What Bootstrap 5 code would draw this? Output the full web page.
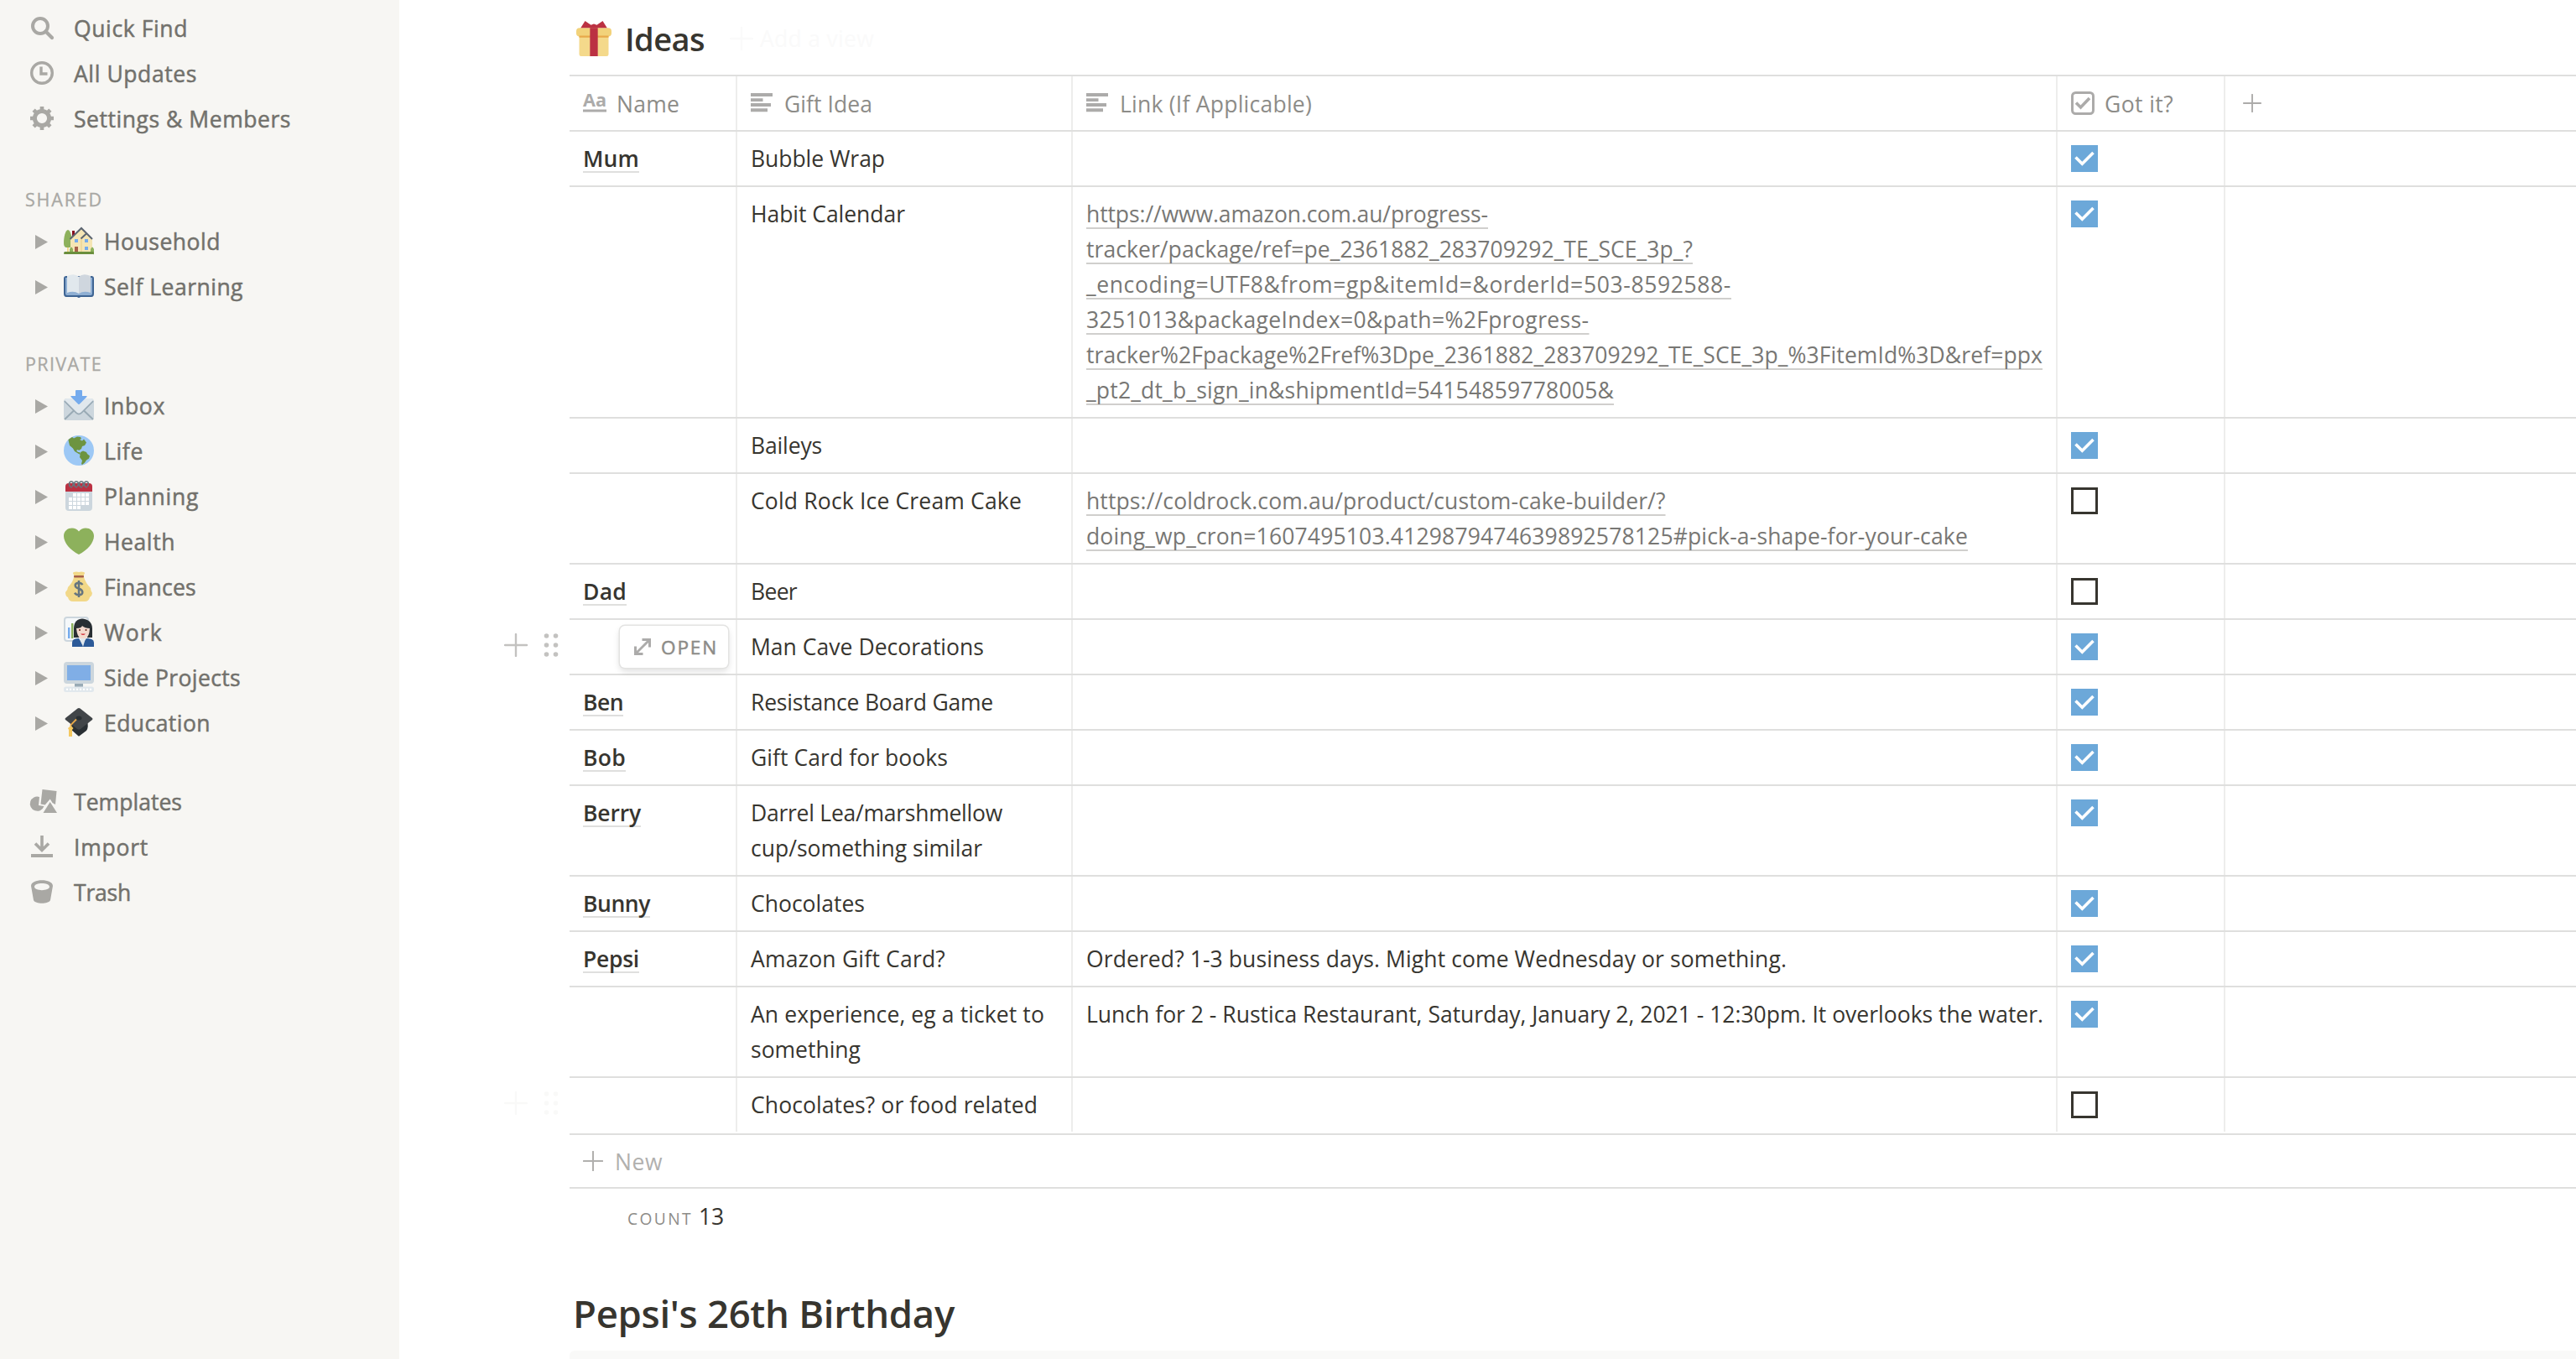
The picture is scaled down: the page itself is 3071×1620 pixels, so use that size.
<!DOCTYPE html>
<html lang="en">
<head>
<meta charset="utf-8">
<title>Ideas</title>
<link rel="stylesheet" href="https://cdn.jsdelivr.net/npm/bootstrap@5.3.0/dist/css/bootstrap.min.css">
<style>
body{font-family:"Open Sans","Noto Sans",sans-serif;font-size:26.5px;line-height:42px;color:#37352f;background:#fff;height:1620px;overflow:hidden}
[data-w]{display:inline-block;white-space:nowrap}
.side{width:476px;background:#f7f6f3;color:#72716c;padding-top:7px;-webkit-text-stroke:.5px #72716c}
.item{height:54px}
.item svg{-webkit-text-stroke:0}
.item .ico{width:28px;height:28px;margin-left:36px;margin-right:24px;color:#a9a8a4;fill:currentColor;overflow:visible}
.item .tri{width:15px;height:17px;margin-left:42px;margin-right:19px;fill:#a9a8a4}
.item .emo{width:36px;height:36px;margin-right:12px;position:relative;top:-1px}
.group{font-size:21.5px;color:#a9a8a4;padding-left:30px;height:52px;padding-top:8px;-webkit-text-stroke:.3px #a9a8a4}
.sec{margin-top:40px}
.sec.tight{margin-top:36px}
.main{width:2595px}
.ttl{height:89px;margin-left:203px;padding-left:8px;padding-top:2px}
.ttl .gift{width:42px;height:42px}
.ttl h3{font-size:38px;font-weight:600;line-height:50px;margin-left:16px}
.faint{color:#fafafa}
.addview{margin-left:30px}
.line{margin-left:203px;border-top:2px solid #dfdfde}
.trow{margin-left:203px;border-bottom:2px solid #dfdfde;position:relative}
.trow>div{padding:11px 14px 11px 16px;border-right:2px solid #ededec;min-height:64px;flex:none}
.trow>div:last-child{border-right:0}
.c1{width:200px}.c2{width:400px}.c3{width:1174px}.c4{width:200px}
.head{color:#8d8c88}
.head span{margin:1px 0 -1px}
.head svg{width:28px;height:28px;margin-right:12px;flex:none;overflow:visible}
.trow>.c5{padding-left:21px}
.head .c5 svg{width:22px;height:22px}
.nm{font-weight:600;text-decoration:underline #dfdfde 2px;text-underline-offset:5px;text-decoration-skip-ink:none}
.url{color:#787774}
.url span{text-decoration:underline #d0cfcd 2px;text-underline-offset:6px;text-decoration-skip-ink:none}
.box{width:32px;height:32px;margin-top:5px;display:block}
.on{background:#6ca8d9}
.off{border:3px solid #37352f}
.handle{position:absolute;left:-78px;top:16px;width:66px;height:28px;color:#c3c2c0}
.handle.faint{color:#f9f9f8}
.openbtn{position:absolute;left:60px;top:7px;width:129px;height:50px;background:#fff;border-radius:6px;box-shadow:0 0 0 1.5px #e3e3e2,0 4px 8px rgba(15,15,15,.14);color:#8d8c88;font-size:22.5px;-webkit-text-stroke:.5px #8d8c88}
.openbtn span{padding-top:2px}
.openbtn svg{margin-left:17px;margin-right:12px}
.newrow{margin-left:203px;height:66px;border-top:2px solid #dfdfde;border-bottom:2px solid #dfdfde;color:#b1b0ae;padding-left:16px}
.newrow svg{margin-right:14px}
.newrow span{margin-top:2px}
.count{padding-left:272px;height:66px;padding-top:2px}
.count small{font-size:19.2px;color:#8d8c88;margin-right:7px}
h2.bday{font-size:45.5px;font-weight:600;line-height:60px;margin:52px 0 0 207px}
.panel{margin-left:203px;margin-top:15px;height:40px;background:#f9f9f8;border-radius:6px 0 0 0}
</style>
<script src="https://cdn.jsdelivr.net/npm/bootstrap@5.3.0/dist/js/bootstrap.bundle.min.js"></script>
</head>
<body>
<svg width="0" height="0" class="position-absolute"><defs>
<symbol id="tri" viewBox="0 0 15 17"><path d="M0 0L15 8.5L0 17Z"/></symbol>
<symbol id="plus" viewBox="0 0 28 28"><path d="M14 1V27M1 14H27" stroke="currentColor" stroke-width="2.4" stroke-linecap="round"/></symbol>
<symbol id="text" viewBox="0 0 28 28"><path fill="#acabaa" d="M0 2h26v4H0zM0 8.2h14.500v3.800H0zM0 14h24v4H0zM0 20.200h20v4H0z"/></symbol>
<symbol id="tick" viewBox="0 0 32 32"><path d="M5.500 14.500L13.300 22.300L26.500 9" fill="none" stroke="#fff" stroke-width="3.600"/></symbol>
<symbol id="dots" viewBox="0 0 66 28"><path d="M14 1V27M1 14H27" stroke="currentColor" stroke-width="2.400" stroke-linecap="round"/><g fill="currentColor"><circle cx="50.500" cy="3" r="2.800"/><circle cx="61.500" cy="3" r="2.800"/><circle cx="50.500" cy="14" r="2.800"/><circle cx="61.500" cy="14" r="2.800"/><circle cx="50.500" cy="25" r="2.800"/><circle cx="61.500" cy="25" r="2.800"/></g></symbol>
</defs></svg>
<div class="d-flex h-100">
<nav class="side h-100 flex-shrink-0">
  <div class="item d-flex align-items-center"><svg class="ico" viewBox="0 0 28 28"><circle cx="12" cy="11" r="9" fill="none" stroke="currentColor" stroke-width="4"/><path d="M18.500 17.500L26 25" stroke="currentColor" stroke-width="4.200" stroke-linecap="round"/></svg><span data-w="136">Quick Find</span></div>
  <div class="item d-flex align-items-center"><svg class="ico" viewBox="0 0 28 28"><circle cx="14" cy="13" r="12.300" fill="none" stroke="currentColor" stroke-width="3.400"/><path d="M13 5.500V14H20.500" fill="none" stroke="currentColor" stroke-width="3.400"/></svg><span data-w="147">All Updates</span></div>
  <div class="item d-flex align-items-center"><svg class="ico" viewBox="0 0 28 28"><circle cx="14" cy="13" r="8.600" fill="none" stroke="currentColor" stroke-width="5"/><g stroke="currentColor" stroke-width="4.600"><path d="M14-1V4M14 22v5M0 13H5M23 13h5M4.100 3.100l3.500 3.500M20.400 19.400l3.500 3.500M23.900 3.100l-3.500 3.500M7.600 19.400l-3.500 3.500"/></g></svg><span data-w="259">Settings &amp; Members</span></div>
  <div class="sec"></div>
  <div class="group"><span data-w="93">SHARED</span></div>
  <div class="item d-flex align-items-center"><svg class="tri"><use href="#tri"/></svg><svg class="emo" viewBox="0 0 36 36"><path fill="#F4D98B" d="M4 26h2v7H4z"/><path fill="#8DB15C" d="M5 5C2 5 0 14 0 20s2 6 5 6 5 0 5-6S8 5 5 5z"/><path fill="#880E1F" d="M10 6h3v6h-3z"/><path fill="#F4E5B4" d="M21 3L8 15v17h26V16L27 10z"/><path fill="#E9CE85" d="M20.500 14h1v18h-1z"/><path fill="none" stroke="#5C6570" stroke-width="2" d="M7.500 16L21 3L34 16M20.500 15.500L27 9.500"/><path fill="#75ABED" d="M13 16h4v4h-4zM25 16h4v4h-4zM25 25h4v4h-4z"/><path fill="#A6604B" d="M13 25h4v8h-4z"/><path fill="#8DB15C" d="M7 33v-5q2-5 4 0v5zM32 33v-5q2-5 4 0v5z"/><path fill="#6A8E3D" d="M1 31h34q1 0 1 2t-1 1H1q-1 0-1-1t1-2z"/></svg><span data-w="139">Household</span></div>
  <div class="item d-flex align-items-center"><svg class="tri"><use href="#tri"/></svg><svg class="emo" viewBox="0 0 36 36"><path fill="#3E6493" d="M3 6h30q3 0 3 3v18q0 4-3 4H20q-2 2-4 0H3q-3 0-3-4V9q0-3 3-3z"/><path fill="#8FAFD3" d="M2 8h32v19q0 2-2 2H4q-2 0-2-2z"/><path fill="#E1E8ED" d="M4 6q9-4 14 1v20q-6-4-14-1z"/><path fill="#CFD6DE" d="M32 6q-9-4-14 1v20q6-4 14-1z"/></svg><span data-w="166">Self Learning</span></div>
  <div class="sec tight"></div>
  <div class="group"><span data-w="92">PRIVATE</span></div>
  <div class="item d-flex align-items-center"><svg class="tri"><use href="#tri"/></svg><svg class="emo" viewBox="0 0 36 36"><rect y="10" width="36" height="26" rx="4" fill="#CCD6DD"/><path d="M1 35L12.500 24M35 35L23.500 24M1 13L15 27q3 3 6 0L35 13" fill="none" stroke="#99AAB5" stroke-width="2"/><path fill="#E1E8ED" d="M4 10h28q3 0 3 2L21 26q-3 3-6 0L1 12q0-2 3-2z"/><path fill="#75ABED" d="M14 1q0-1 1-1h6q1 0 1 1v6h5q1 0 .5 1L19 16.500q-1 1-2 0L8.500 8Q8 7 9 7h5z"/></svg><span data-w="73">Inbox</span></div>
  <div class="item d-flex align-items-center"><svg class="tri"><use href="#tri"/></svg><svg class="emo" viewBox="0 0 36 36"><circle cx="18" cy="18" r="18" fill="#9DC8F5"/><path fill="#6D9440" d="M5.500 5L10 2l2 1.500L16 1.500l4 .5 1 2-2 1 3 1.500 2-2 3 4-2 3.500-3 1-1 3-3 2-1-1-2 1 2 2h2l1 3-3-1.500L13 19l-2-3.500-4-3.500-1-4zM20 20l3-1.500 4 1.500 1 2 3 2.500-1 3-3 2-2 3-3 2.500-1-1 1-4-3-4z"/></svg><span data-w="47">Life</span></div>
  <div class="item d-flex align-items-center"><svg class="tri"><use href="#tri"/></svg><svg class="emo" viewBox="0 0 36 36"><rect x="2" y="4" width="32" height="32" rx="4" fill="#CCD6DD"/><path fill="#BB3142" d="M2 13V7q0-4 4-4h24q4 0 4 4v6z"/><path fill="#fff" d="M11 15h4v4h-4zm5 0h4v4h-4zm5 0h4v4h-4zm5 0h4v4h-4zM6 20h4v4H6zm5 0h4v4h-4zm5 0h4v4h-4zm5 0h4v4h-4zm5 0h4v4h-4zM6 25h4v4H6zm5 0h4v4h-4zm5 0h4v4h-4zm5 0h4v4h-4zm5 0h4v4h-4zM6 30h4v4H6zm5 0h4v4h-4zm5 0h4v4h-4z"/><path fill="none" stroke="#66757F" stroke-width="1.600" d="M10 8C5 7 6 1 9 1s3 4 1 6M16 8C11 7 12 1 15 1s3 4 1 6M22 8C17 7 18 1 21 1s3 4 1 6M28 8C23 7 24 1 27 1s3 4 1 6"/></svg><span data-w="113">Planning</span></div>
  <div class="item d-flex align-items-center"><svg class="tri"><use href="#tri"/></svg><svg class="emo" viewBox="0 0 36 36"><path fill="#8DB15C" d="M36 12C36 2 23 -.5 18 6.500C13 -.5 0 2 0 12C0 20 8 29 18 34C28 29 36 20 36 12z"/></svg><span data-w="85">Health</span></div>
  <div class="item d-flex align-items-center"><svg class="tri"><use href="#tri"/></svg><svg class="emo" viewBox="0 0 36 36"><path fill="#F2D888" d="M12 1q3-1 6 0 3-1 6 0 2 1 0 3v3q2 7 8 13 0 3 2 6 0 3-3 5-1 5-6 5H11q-5 0-6-5-3-1-3-6 3-3 3-6 6-6 7-12V4q-2-2 0-3z"/><rect x="12" y="5" width="12" height="2.600" rx="1" fill="#A6604B"/><path d="M22.500 16q-2-2.600-5-2.200-4 .5-3.800 3.200t4.300 3.800 4.300 4-3.800 3.400q-3.500.3-5.500-2.500M18 11v20" fill="none" stroke="#66757F" stroke-width="2.500"/></svg><span data-w="110">Finances</span></div>
  <div class="item d-flex align-items-center"><svg class="tri"><use href="#tri"/></svg><svg class="emo" viewBox="0 0 36 36"><rect x="1" y="1" width="28" height="28" rx="3" fill="#F5F8FA" stroke="#CCD6DD" stroke-width="2"/><path fill="#75ABED" d="M5 13h2.400v13H5z"/><path fill="#8DB15C" d="M9 8h2.400v18H9z"/><path fill="#292F33" d="M12 25V14C12 6 17 2.500 22 2.500S34 6 34 14v11z"/><path fill="#F3D9CD" d="M15 14q6 0 7-3 3 3 9 3-.5 10-5 12v4h-6v-4q-4-2-5-12z"/><path fill="#2C5A98" d="M10 36v-5q0-5 8-5l4 7 5-7q9 0 9 5v5z"/><path fill="#E1E8ED" d="M19 26h7l-3 10z"/><path fill="#D32F3B" d="M20 20.500h6q-3 3-6 0z"/><circle cx="19" cy="16" r="1" fill="#662113"/><circle cx="26.500" cy="16" r="1" fill="#662113"/></svg><span data-w="70">Work</span></div>
  <div class="item d-flex align-items-center"><svg class="tri"><use href="#tri"/></svg><svg class="emo" viewBox="0 0 36 36"><path fill="#99AAB5" d="M13 25h10v5H13z"/><rect width="36" height="26" rx="4" fill="#CCD6DD"/><path fill="#80AEE6" d="M4 4h28v18H4z"/><rect y="29.500" width="36" height="6.500" rx="2.500" fill="#E1E8ED"/><path d="M3 32.700h30" stroke="#fff" stroke-width="2" stroke-dasharray="2 2"/></svg><span data-w="163">Side Projects</span></div>
  <div class="item d-flex align-items-center"><svg class="tri"><use href="#tri"/></svg><svg class="emo" viewBox="0 0 36 36"><path fill="#292F33" d="M8 19v7l9 8q1 1 2 0l8-6q3-4 1-11z"/><path fill="#414548" d="M16.500 1.500q1.500-1 3 0L34 13q1 1 0 2L20 26q-2 1.500-4 0L2 15q-1-1 0-2z"/><ellipse cx="18" cy="13" rx="3.500" ry="2.500" fill="#292F33"/><path d="M15 14.500L8.500 21V32" fill="none" stroke="#E8A94A" stroke-width="1.800"/><path fill="#F4C860" d="M5 25l3.500-3 3 3-1.500 2v8H6v-8z"/></svg><span data-w="127">Education</span></div>
  <div class="sec"></div>
  <div class="item d-flex align-items-center"><svg class="ico" viewBox="0 0 28 28"><path d="M14.500-1L31.500 1L30 17L26.500 15L23.700 10.500L17.700 17.500L12.500 16.500z"/><path d="M11 8A8.600 8.600 0 1 0 16.500 19L10 18z"/><path d="M23.700 14L32 27H15.500z"/></svg><span data-w="129">Templates</span></div>
  <div class="item d-flex align-items-center"><svg class="ico" viewBox="0 0 28 28"><path d="M14 0V17M6 9.500L14 17.500L22 9.500" fill="none" stroke="currentColor" stroke-width="3.600"/><path d="M1 22h26v4H1z"/></svg><span data-w="89">Import</span></div>
  <div class="item d-flex align-items-center"><svg class="ico" viewBox="0 0 28 28"><path fill-rule="evenodd" d="M1 6C1-3 27-3 27 6L24 23C22 28 6 28 4 23zM5 7C5 12.500 23 12.500 23 7S5 1.500 5 7z"/></svg><span data-w="68">Trash</span></div>
</nav>
<main class="main">
  <div class="ttl d-flex align-items-center"><svg class="gift" viewBox="0 0 36 36"><rect x="3" y="13" width="30" height="23" rx="2" fill="#F4D98B"/><rect y="7" width="36" height="9" rx="3.500" fill="#F2D27A"/><path fill="#E8A94A" d="M3 15h30v2H3z"/><path fill="#BB3142" d="M14 7h8v29h-8z"/><path fill="#BB3142" d="M17 7H4.500L9 0l6 4 3-1 3 1 6-4 4.500 7z"/></svg><h3 class="mb-0"><span data-w="95">Ideas</span></h3><span class="faint addview d-flex align-items-center"><svg width="28" height="28" class="me-2"><use href="#plus"/></svg><span data-w="136">Add a view</span></span></div>
  <div class="line"></div>
  <div class="trow head d-flex">
    <div class="c1 d-flex align-items-center"><svg viewBox="0 0 28 28"><text x="0" y="18" font-size="21" font-weight="700" fill="#acabaa" textLength="28" lengthAdjust="spacingAndGlyphs">Aa</text><path fill="#acabaa" d="M0 21.500h28v3H0z"/></svg><span data-w="75">Name</span></div>
    <div class="c2 d-flex align-items-center"><svg><use href="#text"/></svg><span data-w="105">Gift Idea</span></div>
    <div class="c3 d-flex align-items-center"><svg><use href="#text"/></svg><span data-w="229">Link (If Applicable)</span></div>
    <div class="c4 d-flex align-items-center"><svg viewBox="0 0 28 28"><rect x="1.500" y="1.500" width="25" height="25" rx="4" fill="none" stroke="#acabaa" stroke-width="3"/><path d="M6 13.500L11.500 19L22 8" fill="none" stroke="#acabaa" stroke-width="3.600"/></svg><span data-w="82">Got it?</span></div>
    <div class="c5 d-flex align-items-center"><svg color="#acabaa"><use href="#plus"/></svg></div>
  </div>
  <div class="trow d-flex"><div class="c1"><span class="nm" data-w="67">Mum</span></div><div class="c2"><span data-w="160">Bubble Wrap</span></div><div class="c3"></div><div class="c4"><svg class="box on"><use href="#tick"/></svg></div><div></div></div>
  <div class="trow d-flex"><div class="c1"></div><div class="c2"><span data-w="184">Habit Calendar</span></div><div class="c3 url"><span data-w="479">https://www.amazon.com.au/progress-</span><br><span data-w="723">tracker/package/ref=pe_2361882_283709292_TE_SCE_3p_?</span><br><span data-w="769">_encoding=UTF8&amp;from=gp&amp;itemId=&amp;orderId=503-8592588-</span><br><span data-w="599.5">3251013&amp;packageIndex=0&amp;path=%2Fprogress-</span><br><span data-w="1140">tracker%2Fpackage%2Fref%3Dpe_2361882_283709292_TE_SCE_3p_%3FitemId%3D&amp;ref=ppx</span><br><span data-w="629">_pt2_dt_b_sign_in&amp;shipmentId=54154859778005&amp;</span></div><div class="c4"><svg class="box on"><use href="#tick"/></svg></div><div></div></div>
  <div class="trow d-flex"><div class="c1"></div><div class="c2"><span data-w="85">Baileys</span></div><div class="c3"></div><div class="c4"><svg class="box on"><use href="#tick"/></svg></div><div></div></div>
  <div class="trow d-flex"><div class="c1"></div><div class="c2"><span data-w="323">Cold Rock Ice Cream Cake</span></div><div class="c3 url"><span data-w="690.5">https://coldrock.com.au/product/custom-cake-builder/?</span><br><span data-w="1051">doing_wp_cron=1607495103.4129879474639892578125#pick-a-shape-for-your-cake</span></div><div class="c4"><span class="box off"></span></div><div></div></div>
  <div class="trow d-flex"><div class="c1"><span class="nm" data-w="52">Dad</span></div><div class="c2"><span data-w="55">Beer</span></div><div class="c3"></div><div class="c4"><span class="box off"></span></div><div></div></div>
  <div class="trow d-flex"><div class="c1"><svg class="handle"><use href="#dots"/></svg><span class="openbtn d-flex align-items-center"><svg width="20" height="20" viewBox="0 0 20 20"><path d="M3 17L17 3" stroke="#acabaa" stroke-width="3"/><path d="M9.500 1.500H18.500V10.500M1.500 9.500V18.500H10.500" fill="none" stroke="#acabaa" stroke-width="3"/></svg><span data-w="68">OPEN</span></span></div><div class="c2"><span data-w="278">Man Cave Decorations</span></div><div class="c3"></div><div class="c4"><svg class="box on"><use href="#tick"/></svg></div><div></div></div>
  <div class="trow d-flex"><div class="c1"><span class="nm" data-w="48">Ben</span></div><div class="c2"><span data-w="289">Resistance Board Game</span></div><div class="c3"></div><div class="c4"><svg class="box on"><use href="#tick"/></svg></div><div></div></div>
  <div class="trow d-flex"><div class="c1"><span class="nm" data-w="51">Bob</span></div><div class="c2"><span data-w="235">Gift Card for books</span></div><div class="c3"></div><div class="c4"><svg class="box on"><use href="#tick"/></svg></div><div></div></div>
  <div class="trow d-flex"><div class="c1"><span class="nm" data-w="69">Berry</span></div><div class="c2"><span data-w="300">Darrel Lea/marshmellow</span><br><span data-w="276">cup/something similar</span></div><div class="c3"></div><div class="c4"><svg class="box on"><use href="#tick"/></svg></div><div></div></div>
  <div class="trow d-flex"><div class="c1"><span class="nm" data-w="80">Bunny</span></div><div class="c2"><span data-w="136">Chocolates</span></div><div class="c3"></div><div class="c4"><svg class="box on"><use href="#tick"/></svg></div><div></div></div>
  <div class="trow d-flex"><div class="c1"><span class="nm" data-w="67">Pepsi</span></div><div class="c2"><span data-w="232">Amazon Gift Card?</span></div><div class="c3"><span data-w="835">Ordered? 1-3 business days. Might come Wednesday or something.</span></div><div class="c4"><svg class="box on"><use href="#tick"/></svg></div><div></div></div>
  <div class="trow d-flex"><div class="c1"></div><div class="c2"><span data-w="350">An experience, eg a ticket to</span><br><span data-w="131">something</span></div><div class="c3"><span data-w="1141">Lunch for 2 - Rustica Restaurant, Saturday, January 2, 2021 - 12:30pm. It overlooks the water.</span></div><div class="c4"><svg class="box on"><use href="#tick"/></svg></div><div></div></div>
  <div class="trow d-flex border-white"><div class="c1"><svg class="handle faint"><use href="#dots"/></svg></div><div class="c2"><span data-w="342">Chocolates? or food related</span></div><div class="c3"></div><div class="c4"><span class="box off"></span></div><div></div></div>
  <div class="newrow d-flex align-items-center"><svg width="24" height="24"><use href="#plus"/></svg><span data-w="57">New</span></div>
  <div class="count d-flex align-items-center"><div><small data-w="78">COUNT</small><span data-w="30">13</span></div></div>
  <h2 class="bday"><span data-w="455">Pepsi's 26th Birthday</span></h2>
  <div class="panel"></div>
</main>
</div>
<script>
document.querySelectorAll('[data-w]').forEach(function (el) {
  var natural = el.getBoundingClientRect().width;
  el.style.letterSpacing = ((el.dataset.w - natural) / el.textContent.length).toFixed(3) + 'px';
});
</script>
</body>
</html>
